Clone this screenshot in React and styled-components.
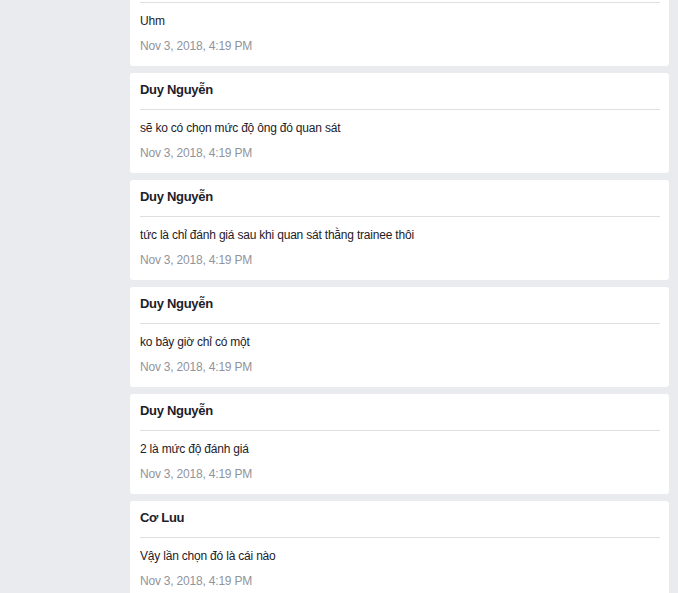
import React from "react";
import styled, { createGlobalStyle } from "styled-components";

const GlobalStyle = createGlobalStyle`
  html, body {
    margin: 0;
    padding: 0;
    background: #e9ebee;
    overflow: hidden;
  }
  body {
    font-family: "Liberation Sans", Arial, sans-serif;
    -webkit-font-smoothing: antialiased;
  }
`;

const Page = styled.div`
  width: 678px;
  height: 593px;
  overflow: hidden;
  background: #e9ebee;
`;

const Feed = styled.div`
  display: flex;
  flex-direction: column;
  gap: 7px;
  margin-top: -34px;
  padding: 0 9px 0 130px;
`;

const Card = styled.div`
  background: #ffffff;
  border-radius: 3px;
  padding: 0 9px 0 10px;
  height: 100px;
  box-sizing: border-box;
`;

const Header = styled.div`
  padding: 8px 0 11px;
  border-bottom: 1px solid #dddfe2;
`;

const Name = styled.div`
  font-size: 13px;
  font-weight: bold;
  line-height: 17px;
  letter-spacing: -0.3px;
  color: #1d2129;
`;

const Body = styled.div`
  padding-top: 10px;
  display: flex;
  flex-direction: column;
  gap: 9px;
`;

const Message = styled.div`
  font-size: 12px;
  line-height: 16px;
  letter-spacing: -0.2px;
  color: #1d2129;
`;

const Time = styled.div`
  font-size: 12px;
  line-height: 16px;
  letter-spacing: -0.2px;
  color: #90949c;
`;

const messages = [
  { name: "Duy Nguyễn", text: "Uhm" },
  { name: "Duy Nguyễn", text: "sẽ ko có chọn mức độ ông đó quan sát" },
  { name: "Duy Nguyễn", text: "tức là chỉ đánh giá sau khi quan sát thằng trainee thôi" },
  { name: "Duy Nguyễn", text: "ko bây giờ chỉ có một" },
  { name: "Duy Nguyễn", text: "2 là mức độ đánh giá" },
  { name: "Cơ Luu", text: "Vậy lần chọn đó là cái nào" },
];

export default function App() {
  return (
    <Page>
      <GlobalStyle />
      <Feed>
        {messages.map((m, i) => (
          <Card key={i}>
            <Header>
              <Name>{m.name}</Name>
            </Header>
            <Body>
              <Message>{m.text}</Message>
              <Time>Nov 3, 2018, 4:19 PM</Time>
            </Body>
          </Card>
        ))}
      </Feed>
    </Page>
  );
}
